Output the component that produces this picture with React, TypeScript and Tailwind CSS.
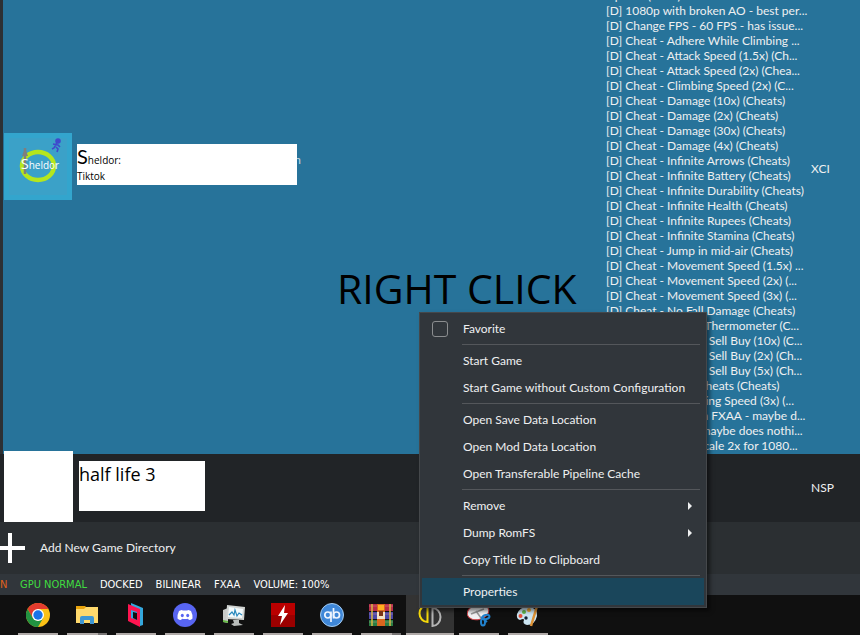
import type { ReactNode } from "react";

const addOns = [
  "Update (1.1.2)",
  "[D] 1080p with broken AO - best per...",
  "[D] Change FPS - 60 FPS - has issue...",
  "[D] Cheat - Adhere While Climbing ...",
  "[D] Cheat - Attack Speed (1.5x) (Ch...",
  "[D] Cheat - Attack Speed (2x) (Chea...",
  "[D] Cheat - Climbing Speed (2x) (C...",
  "[D] Cheat - Damage (10x) (Cheats)",
  "[D] Cheat - Damage (2x) (Cheats)",
  "[D] Cheat - Damage (30x) (Cheats)",
  "[D] Cheat - Damage (4x) (Cheats)",
  "[D] Cheat - Infinite Arrows (Cheats)",
  "[D] Cheat - Infinite Battery (Cheats)",
  "[D] Cheat - Infinite Durability (Cheats)",
  "[D] Cheat - Infinite Health (Cheats)",
  "[D] Cheat - Infinite Rupees (Cheats)",
  "[D] Cheat - Infinite Stamina (Cheats)",
  "[D] Cheat - Jump in mid-air (Cheats)",
  "[D] Cheat - Movement Speed (1.5x) ...",
  "[D] Cheat - Movement Speed (2x) (...",
  "[D] Cheat - Movement Speed (3x) (...",
  "[D] Cheat - No Fall Damage (Cheats)",
  "[D] Cheat - Freeze Thermometer (C...",
  "[D] Cheat - Rupees Sell Buy (10x) (C...",
  "[D] Cheat - Rupees Sell Buy (2x) (Ch...",
  "[D] Cheat - Rupees Sell Buy (5x) (Ch...",
  "[D] Cheat - Basic Cheats (Cheats)",
  "[D] Cheat - Swimming Speed (3x) (...",
  "[D] Graphics - With FXAA - maybe d...",
  "[D] Lower LODs - maybe does nothi...",
  "[D] Resolutions - Scale 2x for 1080...",
];

function Item({ children, sub, active }: { children: ReactNode; sub?: boolean; active?: boolean }) {
  return (
    <button
      type="button"
      role="menuitem"
      className={`flex h-[27px] w-full items-center justify-between pr-3 pl-[41px] text-left whitespace-nowrap ${active ? "bg-[#1a465b]" : ""}`}
    >
      {children}
      {sub && (
        <svg width="4" height="8" viewBox="0 0 4 8" fill="#eff0f1" aria-hidden="true">
          <path d="M0 0L4 4L0 8Z" />
        </svg>
      )}
    </button>
  );
}

function Separator() {
  return <div role="separator" className="my-[2px] mr-1 ml-10 h-px bg-[#54575b]" />;
}

function ContextMenu() {
  return (
    <div
      role="menu"
      className="absolute top-[312px] left-[419px] w-72 border border-[#45484b] bg-[#31363b] p-[2px] text-[12px] text-[#eff0f1] shadow-[3px_3px_4px_rgba(0,0,0,0.5)]"
    >
      <label className="flex h-[27px] items-center pl-[10px]">
        <input
          type="checkbox"
          className="mr-[15px] size-4 appearance-none rounded-[3px] border border-[#8b8d8f] bg-[#31363b]"
        />
        Favorite
      </label>
      <Separator />
      <Item>Start Game</Item>
      <Item>Start Game without Custom Configuration</Item>
      <Separator />
      <Item>Open Save Data Location</Item>
      <Item>Open Mod Data Location</Item>
      <Item>Open Transferable Pipeline Cache</Item>
      <Separator />
      <Item sub>Remove</Item>
      <Item sub>Dump RomFS</Item>
      <Item>Copy Title ID to Clipboard</Item>
      <Separator />
      <Item active>Properties</Item>
    </div>
  );
}

function SheldorCover() {
  return (
    <svg width="68" height="67" viewBox="0 0 68 67" className="shrink-0" role="img" aria-label="Sheldor">
      <rect width="68" height="67" fill="#33a5cd" />
      <rect x="5" y="5" width="58" height="57" fill="#3ba1c8" />
      <ellipse cx="34" cy="33" rx="16" ry="14" fill="none" stroke="#b5e61d" strokeWidth="4.5" />
      <path d="M21 15V41" stroke="#7f7f7f" strokeWidth="2.5" fill="none" />
      <path d="M18 23L21 15L24 23Z" fill="#7f7f7f" />
      <g stroke="#3f48cc" strokeWidth="1.6" fill="#3f48cc">
        <circle cx="54" cy="8" r="2" />
        <path d="M53 10L50 15L48 16M49 11L54 12L56 14M52 14L54 16L53 19" fill="none" />
      </g>
      <text x="17" y="36" fill="#fff" fontSize="10" fontFamily="'Open Sans', sans-serif">
        <tspan fontSize="14">S</tspan>heldor
      </text>
    </svg>
  );
}

function GameTable() {
  return (
    <table className="w-full table-fixed border-separate border-spacing-0 text-[12px] text-[#eff0f1]">
      <colgroup>
        <col />
        <col className="w-[205px]" />
        <col className="w-[49px]" />
      </colgroup>
      <tbody>
        <tr className="bg-[#27739a] align-top">
          <td className="border-l-3 border-[#2d3033] p-0">
            <div className="flex items-start pt-[133px] pl-px">
              <SheldorCover />
              <div className="mt-[11px] ml-[5px] h-[41px] w-[220px] bg-white font-['Open_Sans'] text-[10px] leading-3 text-black">
                <div className="h-[26px] leading-6">
                  <span className="font-['Lato'] text-[20px] leading-6">S</span>heldor:
                </div>
                <div>Tiktok</div>
              </div>
              <span className="mt-[18px] w-1 overflow-hidden text-right text-[#c5d7e0]">
                <span className="-ml-[3px]">n</span>
              </span>
            </div>
          </td>
          <td className="p-0">
            <ul className="flex h-[454px] flex-col justify-end overflow-hidden pb-px leading-[15px] whitespace-nowrap">
              {addOns.map((name) => (
                <li key={name} className="shrink-0">
                  {name}
                </li>
              ))}
            </ul>
          </td>
          <td className="p-0 pt-[160px]">XCI</td>
        </tr>
        <tr className="h-[68px] bg-[#212427]">
          <td className="p-0">
            <div className="flex pl-1">
              <div className="-mt-[3px] h-[71px] w-[69px] bg-white" />
              <div className="mt-[7px] ml-[6px] h-[50px] w-[126px] bg-white font-['Open_Sans'] text-[18px] leading-[26px] text-black">
                half life 3
              </div>
            </div>
          </td>
          <td />
          <td className="p-0">NSP</td>
        </tr>
      </tbody>
    </table>
  );
}

function TaskButton({ label, children, active, stacked }: { label: string; children: ReactNode; active?: boolean; stacked?: boolean }) {
  return (
    <button
      type="button"
      aria-label={label}
      className={`flex h-10 w-12 flex-col items-center justify-between pt-2 ${active ? "bg-[#333333]" : ""}`}
    >
      <svg width="24" height="24" viewBox="0 0 24 24" aria-hidden="true">
        {children}
      </svg>
      <span className={`flex h-[2px] ${active ? "w-12" : "w-10"} bg-[#b0aaa8]`}>
        {stacked && <span className="ml-auto h-full w-[9px] bg-[#777474]" />}
      </span>
    </button>
  );
}

function Taskbar() {
  return (
    <nav className="flex gap-px border-b border-white bg-[#101010] pl-[14px]">
      <TaskButton label="Chrome">
        <circle cx="12" cy="12" r="12" fill="#fbc116" />
        <path d="M12 6H22.4A12 12 0 0 0 1.6 6L6.8 15Z" fill="#e33b2e" />
        <path d="M1.6 6A12 12 0 0 0 12 24L17.2 15L12 18L6.8 15Z" fill="#229342" />
        <circle cx="12" cy="12" r="6" fill="#fff" />
        <circle cx="12" cy="12" r="4.7" fill="#1a73e8" />
      </TaskButton>
      <TaskButton label="File Explorer" stacked>
        <path d="M1 3H10L12 5H23V20H1Z" fill="#e8a30c" />
        <path d="M1 6H9L11 4H23V20H1Z" fill="#ffd96c" />
        <path d="M5 21V15Q5 13 7 13H17Q19 13 19 15V21H15V17H9V21Z" fill="#3f97d3" />
      </TaskButton>
      <TaskButton label="yuzu Launcher">
        <path d="M7 0L19 5V22L16 23L7 2Z" fill="#35a8dd" />
        <path d="M4 1L16 6V24L4 18Z" fill="#ff1450" />
        <path d="M7 7L13 9V17L7 15Z" fill="#35a8dd" />
        <path d="M9 9L13 10V17L9 15Z" fill="#101010" />
      </TaskButton>
      <TaskButton label="Discord">
        <circle cx="12" cy="12" r="12" fill="#5865f2" />
        <path
          d="M8.500 7L10 7.500H14L15.500 7L18 8Q20 12 19.500 15.500Q18 17 16 17L15 15.700Q12 16.500 9 15.700L8 17Q6 17 4.500 15.500Q4 12 6 8Z"
          fill="#fff"
        />
        <ellipse cx="9.300" cy="12.500" rx="1.500" ry="1.700" fill="#5865f2" />
        <ellipse cx="14.700" cy="12.500" rx="1.500" ry="1.700" fill="#5865f2" />
      </TaskButton>
      <TaskButton label="System Monitor">
        <path d="M1 7L6 5V20L1 19Z" fill="#c8cac8" />
        <path d="M1 17L6 18V20L1 19Z" fill="#65b844" />
        <path d="M5 2L23 4L22 17L4 16Z" fill="#d0d3d1" />
        <path d="M7 4L21 6L20 15L6 14Z" fill="#f3fafc" />
        <path d="M7 12L10 9L12 12L13 7L15 13L17 10L20 12" stroke="#2788bd" strokeWidth="1.200" fill="none" />
        <path d="M11 17H17V20L21 22L12 23L9 21L12 20Z" fill="#b9bdbb" />
      </TaskButton>
      <TaskButton label="Flash">
        <rect width="24" height="24" fill="#ba0000" />
        <path d="M0 12H24V24H0Z" fill="#8f0000" opacity=".7" />
        <path d="M14 2L7 13H11L9 22L17 10H13Z" fill="#fff" />
      </TaskButton>
      <TaskButton label="qBittorrent">
        <circle cx="12" cy="12" r="11.500" fill="#3f87d8" stroke="#a5cdf2" />
        <g fill="none" stroke="#eef5ff" strokeWidth="1.700">
          <circle cx="7.800" cy="12" r="3" />
          <path d="M11 8.500V19M13.500 5V15.500" />
          <circle cx="16.500" cy="12" r="3" />
        </g>
      </TaskButton>
      <TaskButton label="WinRAR" stacked>
        <path d="M0 1H24V8H0Z" fill="#b72c48" />
        <path d="M0 9H24V16H0Z" fill="#4b47a8" />
        <path d="M0 17H24V23H0Z" fill="#287d44" />
        <path d="M0 3H24M0 11H24M0 19H24" stroke="#e3a6a0" strokeWidth="1" opacity=".4" />
        <path d="M3 1V23M21 1V23" stroke="#d8b744" strokeWidth="1.500" />
        <path d="M8 1H16V23H8Z" fill="#d9661f" />
        <path d="M9 2H15V7H9Z" fill="#ffb020" />
        <rect x="8" y="9" width="8" height="7" fill="#f2e3c5" />
        <path d="M10 8V13H14V8" fill="#7a3417" />
      </TaskButton>
      <TaskButton label="yuzu" active>
        <path d="M9.500 2A8 8.500 0 0 0 9.500 19Z" fill="none" stroke="#f5d90a" strokeWidth="2" />
        <path d="M14.500 5A8 9 0 0 1 14.500 23Z" fill="none" stroke="#b5b5b5" strokeWidth="2" />
      </TaskButton>
      <TaskButton label="Snipping Tool">
        <ellipse cx="11" cy="9" rx="11" ry="7.500" fill="#f1f1f3" stroke="#cf3a40" transform="rotate(-15 11 9)" />
        <path d="M4 11L17 6M9 8L14 15" stroke="#999" strokeWidth="1.500" />
        <g fill="none" stroke="#2283cf" strokeWidth="2">
          <ellipse cx="19" cy="14" rx="3.500" ry="2" transform="rotate(-15 19 14)" />
          <ellipse cx="16" cy="19" rx="2" ry="3.500" />
          <path d="M14 14L20 19" />
        </g>
      </TaskButton>
      <TaskButton label="Paint">
        <path d="M1 11Q4 3 13 4Q22 5 21 13Q19 22 11 22Q6 21 8 17Q8 15 4 17Q0 16 1 11Z" fill="#cce5f2" />
        <circle cx="4.500" cy="13" r="2" fill="#e74f37" />
        <circle cx="8" cy="9" r="2" fill="#62b84c" />
        <circle cx="13" cy="7" r="2" fill="#f1a72f" />
        <circle cx="10" cy="15" r="1.700" fill="#123" />
        <path d="M22 0L15 23" stroke="#dc9135" strokeWidth="2.500" />
      </TaskButton>
    </nav>
  );
}

export default function App() {
  return (
    <main className="relative overflow-hidden bg-[#2b2f32] font-['Lato','Open_Sans',sans-serif]">
      <GameTable />
      <button type="button" className="flex h-[52px] w-full items-center gap-[15px] text-[12px] text-[#eff0f1]">
        <svg width="25" height="30" viewBox="0 0 25 30" aria-hidden="true">
          <path d="M8 0H12V13H25V17H12V30H8V17H0V13H8Z" fill="#fff" />
        </svg>
        Add New Game Directory
      </button>
      <footer className="flex h-[21px] items-center gap-[13px] bg-[#31363b] pt-px font-['DejaVu_Sans_Condensed','DejaVu_Sans',sans-serif] text-[11px] whitespace-nowrap text-white">
        <span className="w-[7px] text-[#e0621c]">N</span>
        <span className="text-[#40dd40]">GPU NORMAL</span>
        <span>DOCKED</span>
        <span>BILINEAR</span>
        <span>FXAA</span>
        <span>VOLUME: 100%</span>
      </footer>
      <Taskbar />
      <p className="absolute top-[262px] left-[337px] font-['Open_Sans'] text-[41px] leading-[52px] whitespace-nowrap text-black">
        RIGHT CLICK
      </p>
      <ContextMenu />
    </main>
  );
}
